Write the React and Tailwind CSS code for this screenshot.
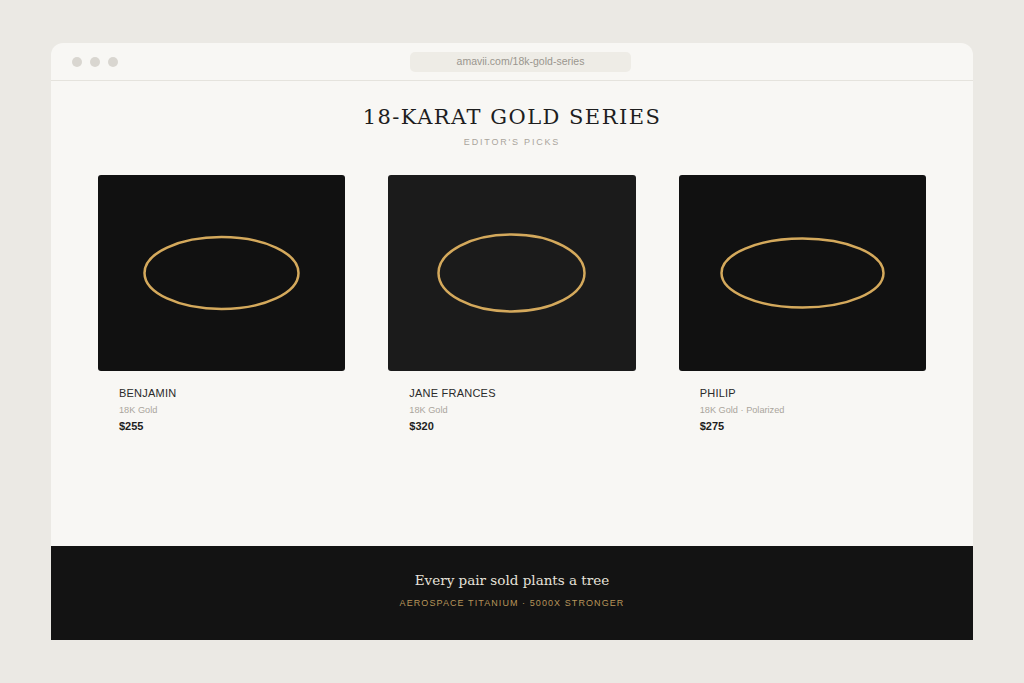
const products = [
  { name: 'BENJAMIN', spec: '18K Gold', price: '$255', bg: 'bg-[#111111]', rx: 77, ry: 36 },
  { name: 'JANE FRANCES', spec: '18K Gold', price: '$320', bg: 'bg-[#1b1b1b]', rx: 73, ry: 38.5 },
  { name: 'PHILIP', spec: '18K Gold · Polarized', price: '$275', bg: 'bg-[#111111]', rx: 81, ry: 34.5 },
];

function Frame({ rx, ry }) {
  return (
    <svg width="247" height="196" viewBox="0 0 247 196" className="block">
      <ellipse cx="123.5" cy="98" rx={rx} ry={ry} fill="none" stroke="#d4a95c" strokeWidth="2.5" />
    </svg>
  );
}

export default function App() {
  return (
    <div className="min-h-[683px] w-[1024px] bg-[#ebe9e4] pt-[43px] font-['Liberation_Sans',Arial,sans-serif]">
      <div className="ml-[51px] w-[922px] overflow-hidden rounded-t-[12px] bg-[#f8f7f4]">
        <div className="flex h-[38px] items-center border-b border-[#e5e3dd] px-[21px]">
          <div className="flex gap-[8px]">
            <span className="h-[10px] w-[10px] rounded-full bg-[#d9d6d0]" />
            <span className="h-[10px] w-[10px] rounded-full bg-[#d9d6d0]" />
            <span className="h-[10px] w-[10px] rounded-full bg-[#d9d6d0]" />
          </div>
          <div className="ml-[292px] flex h-[20px] w-[221px] items-center justify-center rounded-[5px] bg-[#eeece6] text-[10.5px] text-[#9a968e]">
            amavii.com/18k-gold-series
          </div>
        </div>

        <div className="h-[465px] px-[47px] pt-[22px]">
          <h1 className="text-center font-['DejaVu_Serif',serif] text-[21px] leading-[28px] tracking-[0.07em] text-[#1e1e1e]">
            18-KARAT GOLD SERIES
          </h1>
          <p className="mt-[5px] text-center text-[9px] tracking-[0.2em] text-[#aaa59c]">EDITOR'S PICKS</p>

          <div className="mt-[25px] grid grid-cols-3 gap-[43px]">
            {products.map((p) => (
              <div key={p.name}>
                <div className={`h-[196px] overflow-hidden rounded-[3px] ${p.bg}`}>
                  <Frame rx={p.rx} ry={p.ry} />
                </div>
                <div className="px-[21px] pt-[15px]">
                  <p className="text-[11px] leading-[14px] tracking-[0.02em] text-[#2a2a2a]">{p.name}</p>
                  <p className="mt-[4px] text-[9.2px] leading-[12px] text-[#aaa59c]">{p.spec}</p>
                  <p className="mt-[3px] text-[11px] font-bold leading-[14px] text-[#1e1e1e]">{p.price}</p>
                </div>
              </div>
            ))}
          </div>
        </div>

        <div className="flex h-[94px] flex-col items-center bg-[#131313] pt-[24px]">
          <p className="font-['DejaVu_Serif',serif] text-[13.5px] leading-[20px] text-[#e6e2da]">Every pair sold plants a tree</p>
          <p className="mt-[7px] text-[9px] tracking-[0.12em] text-[#b8955a]">AEROSPACE TITANIUM · 5000X STRONGER</p>
        </div>
      </div>
    </div>
  );
}
